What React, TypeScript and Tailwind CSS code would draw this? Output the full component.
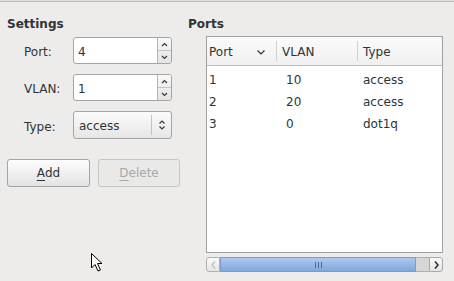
import React from 'react'

const font = "font-['DejaVu_Sans',sans-serif]"

const ports = [
  { port: '1', vlan: '10', type: 'access' },
  { port: '2', vlan: '20', type: 'access' },
  { port: '3', vlan: '0', type: 'dot1q' },
]

function SpinBox({ value }: { value: string }) {
  return (
    <div className="flex h-[27px] w-[99px] overflow-hidden rounded-[3px] border border-[#a4a4a4] bg-white">
      <div className="flex flex-1 items-center pl-[4px] pt-[3px] text-[12px] leading-[14px] text-[#2e3436]">{value}</div>
      <div className="flex w-[14px] flex-col border-l border-[#b4b4b4] bg-gradient-to-b from-[#f9f9f9] to-[#e4e4e4]">
        <div className="flex flex-1 items-center justify-center border-b border-[#c4c4c4]">
          <svg width="7" height="5" viewBox="0 0 7 5">
            <path d="M1 4 L3.5 1.5 L6 4" fill="none" stroke="#3a3a3a" strokeWidth="1.2" />
          </svg>
        </div>
        <div className="flex flex-1 items-center justify-center">
          <svg width="7" height="5" viewBox="0 0 7 5">
            <path d="M1 1 L3.5 3.5 L6 1" fill="none" stroke="#3a3a3a" strokeWidth="1.2" />
          </svg>
        </div>
      </div>
    </div>
  )
}

function Combo({ value }: { value: string }) {
  return (
    <div className="flex h-[28px] w-[99px] items-center rounded-[3px] border border-[#a4a4a4] bg-gradient-to-b from-[#fbfbfb] to-[#e6e6e6]">
      <div className="flex-1 pl-[5px] pt-[2px] text-[12px] leading-[14px] text-[#2e3436]">{value}</div>
      <div className="h-[20px] w-px bg-[#c2c2c2]" />
      <div className="flex w-[19px] items-center justify-center">
        <svg width="8" height="12" viewBox="0 0 8 12">
          <path d="M1.5 4.5 L4 2 L6.5 4.5 M1.5 7.5 L4 10 L6.5 7.5" fill="none" stroke="#3a3a3a" strokeWidth="1.2" />
        </svg>
      </div>
    </div>
  )
}

export default function App() {
  return (
    <div className={`relative flex h-[281px] w-[454px] flex-col overflow-hidden bg-[#edeceb] ${font} text-[#2e3436]`}>
      <div className="h-px bg-[#e2e1df]" />
      <div className="h-px bg-[#bcbbb9]" />

      <div className="flex pt-[15px]">
        {/* Settings */}
        <div className="w-[188px] pl-[7px]">
          <div className="h-[14px] text-[12px] font-bold leading-[14px]">Settings</div>
          <div className="mt-[6px] flex flex-col gap-[10px]">
            <div className="flex items-center">
              <div className="w-[66px] pl-[17px] pt-[3px] text-[12px] leading-[14px]">Port:</div>
              <SpinBox value="4" />
            </div>
            <div className="flex items-center">
              <div className="w-[66px] pl-[17px] pt-[3px] text-[12px] leading-[14px]">VLAN:</div>
              <SpinBox value="1" />
            </div>
            <div className="flex items-center">
              <div className="w-[66px] pl-[17px] pt-[3px] text-[12px] leading-[14px]">Type:</div>
              <Combo value="access" />
            </div>
          </div>
          <div className="mt-[20px] flex gap-[8px]">
            <div className="flex h-[28px] w-[83px] items-center justify-center rounded-[3px] border border-[#a4a4a4] bg-gradient-to-b from-[#fdfdfd] to-[#e3e3e3] text-[12px] leading-[14px]">
              <span className="underline underline-offset-[3px]">A</span>dd
            </div>
            <div className="flex h-[28px] w-[82px] items-center justify-center rounded-[3px] border border-[#c6c6c6] bg-[#e9e9e8] text-[12px] leading-[14px] text-[#a8a8a8]">
              <span className="underline underline-offset-[3px]">D</span>elete
            </div>
          </div>
        </div>

        {/* Ports */}
        <div className="flex flex-col">
          <div className="h-[14px] text-[12px] font-bold leading-[14px]">Ports</div>
          <div className="ml-[18px] mt-[5px] flex h-[217px] w-[237px] flex-col border border-[#a0a0a0] bg-white">
            <div className="flex h-[29px] items-center border-b border-[#bdbdbd] bg-gradient-to-b from-[#fbfbfb] to-[#f0f0f0] text-[12px] leading-[14px]">
              <div className="flex w-[69px] items-center pl-[2px] pt-[2px]">
                <span className="flex-1">Port</span>
                <svg className="mr-[11px]" width="8" height="5" viewBox="0 0 8 5">
                  <path d="M0.5 0.5 L4 4 L7.5 0.5" fill="none" stroke="#2e3436" strokeWidth="1.2" />
                </svg>
              </div>
              <div className="h-[20px] w-px bg-[#cfcfcf]" />
              <div className="w-[80px] pl-[5px] pt-[2px]">VLAN</div>
              <div className="h-[20px] w-px bg-[#cfcfcf]" />
              <div className="flex-1 pl-[5px] pt-[2px]">Type</div>
            </div>
            <div className="pt-[3px]">
              {ports.map((p) => (
                <div key={p.port} className="flex h-[22px] items-center text-[12px] leading-[14px]">
                  <div className="w-[70px] pl-[2px]">{p.port}</div>
                  <div className="w-[81px] pl-[9px]">{p.vlan}</div>
                  <div className="flex-1 pl-[5px]">{p.type}</div>
                </div>
              ))}
            </div>
          </div>

          {/* horizontal scrollbar */}
          <div className="ml-[18px] mt-[4px] flex h-[15px] w-[237px]">
            <div className="flex w-[14px] items-center justify-center rounded-l-[3px] border border-[#b0b0b0] bg-gradient-to-b from-[#fafafa] to-[#e6e6e6]">
              <svg width="5" height="8" viewBox="0 0 5 8">
                <path d="M4 0.5 L1 4 L4 7.5" fill="none" stroke="#bdbdbd" strokeWidth="1.2" />
              </svg>
            </div>
            <div className="flex w-[196px] items-center justify-center border border-[#7d9cc7] bg-gradient-to-b from-[#adc9ee] to-[#80a8dc]">
              <div className="flex gap-[2px]">
                <div className="h-[6px] w-px bg-[#4a6a96]" />
                <div className="h-[6px] w-px bg-[#4a6a96]" />
                <div className="h-[6px] w-px bg-[#4a6a96]" />
              </div>
            </div>
            <div className="w-[13px] border-y border-[#b0b0b0] bg-[#d6d6d6]" />
            <div className="flex w-[14px] items-center justify-center rounded-r-[3px] border border-[#a8a8a8] bg-gradient-to-b from-[#fafafa] to-[#e6e6e6]">
              <svg width="5" height="8" viewBox="0 0 5 8">
                <path d="M1 0.5 L4 4 L1 7.5" fill="none" stroke="#2a2a2a" strokeWidth="1.5" />
              </svg>
            </div>
          </div>
        </div>
      </div>

      {/* mouse pointer */}
      <svg className="absolute left-[90px] top-[252px]" width="14" height="21" viewBox="0 0 14 21">
        <path d="M1.5 1.5 L1.5 16 L5 12.5 L8 19 L10.5 18 L7.5 11.5 L12 11.5 Z" fill="white" stroke="black" strokeWidth="1" strokeLinejoin="round" />
      </svg>
    </div>
  )
}
